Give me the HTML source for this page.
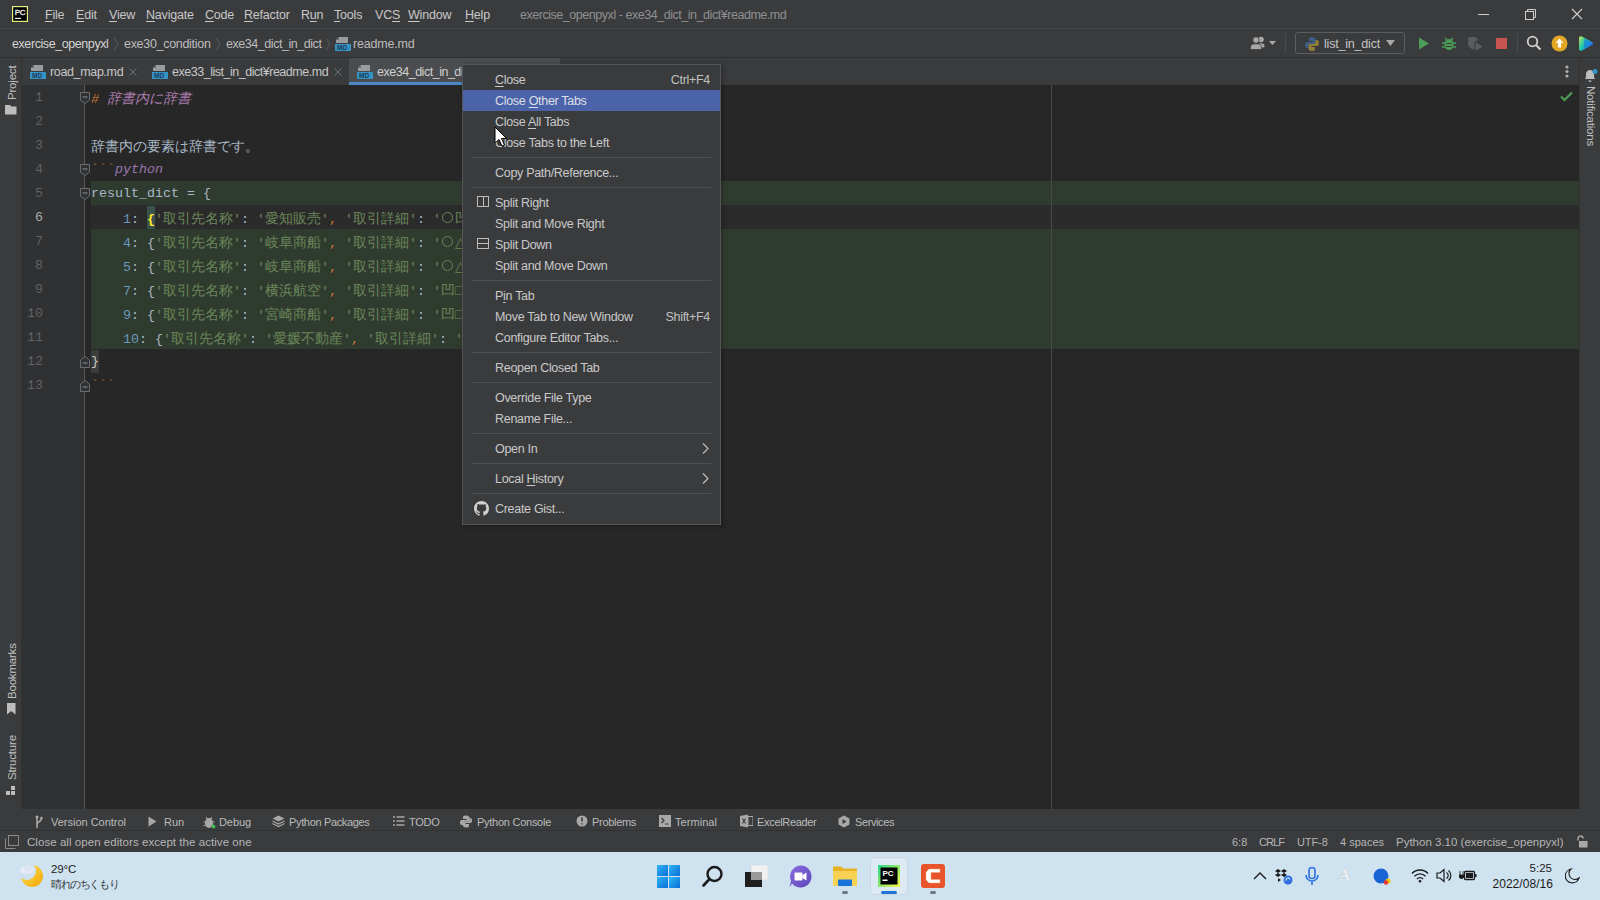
<!DOCTYPE html>
<html><head><meta charset="utf-8">
<style>
*{box-sizing:border-box;margin:0;padding:0}
html,body{width:1600px;height:900px;overflow:hidden;background:#272727;font-family:"Liberation Sans",sans-serif}
.a{position:absolute}
.t{position:absolute;white-space:nowrap;font-size:12.5px;color:#bbbbbb;line-height:16px}
.m{font-family:"Liberation Mono",monospace;font-size:13.33px;white-space:pre;position:absolute;line-height:24px;color:#a9b7c6}
.j{font-size:14px;font-family:"Liberation Sans",sans-serif}
u{text-decoration:underline;text-underline-offset:2px}
</style></head><body>

<!-- title bar -->
<div class="a" style="left:0;top:0;width:1600px;height:28px;background:#3a3b3d"></div>
<div class="a" style="left:0;top:28px;width:1600px;height:1px;background:#46474a"></div>
<!-- nav bar -->
<div class="a" style="left:0;top:29px;width:1600px;height:28px;background:#3a3b3d"></div>
<div class="a" style="left:0;top:57px;width:1600px;height:1px;background:#2d2f30"></div>
<!-- tabs row -->
<div class="a" style="left:21px;top:58px;width:1559px;height:27px;background:#3a3b3d"></div>
<!-- left strip -->
<div class="a" style="left:0;top:58px;width:21px;height:751px;background:#3a3b3d"></div>
<div class="a" style="left:21px;top:58px;width:1px;height:751px;background:#323232"></div>
<!-- right strip -->
<div class="a" style="left:1580px;top:58px;width:20px;height:751px;background:#3a3b3d"></div>
<div class="a" style="left:1579px;top:58px;width:1px;height:751px;background:#323232"></div>
<!-- gutter -->
<div class="a" style="left:22px;top:85px;width:63px;height:724px;background:#2f3133"></div>
<!-- editor -->
<div class="a" style="left:85px;top:85px;width:1494px;height:724px;background:#272727"></div>
<!-- bottom tool bar -->
<div class="a" style="left:0;top:809px;width:1600px;height:21px;background:#3a3b3d"></div>
<div class="a" style="left:0;top:830px;width:1600px;height:1px;background:#323334"></div>
<!-- status bar -->
<div class="a" style="left:0;top:831px;width:1600px;height:21px;background:#3a3b3d"></div>
<!-- taskbar -->
<div class="a" style="left:0;top:852px;width:1600px;height:48px;background:#cee2f0"></div>


<!-- TITLE BAR CONTENT -->
<svg class="a" style="left:12px;top:6px" width="16" height="16" viewBox="0 0 16 16"><rect x="0.6" y="0.6" width="14.8" height="14.8" fill="#000" stroke="#e2f07e" stroke-width="1.2"/><text x="2.8" y="9" font-family="Liberation Sans" font-size="8" fill="#f0f0f0" letter-spacing="-0.3" stroke="#f0f0f0" stroke-width="0.3">PC</text><rect x="3" y="11.8" width="6" height="1.2" fill="#f0f0f0"/></svg>
<div class="t" style="left:45px;top:7px;color:#c8c8c8;letter-spacing:-0.2px"><u>F</u>ile</div>
<div class="t" style="left:76px;top:7px;color:#c8c8c8;letter-spacing:-0.2px"><u>E</u>dit</div>
<div class="t" style="left:109px;top:7px;color:#c8c8c8;letter-spacing:-0.2px"><u>V</u>iew</div>
<div class="t" style="left:146px;top:7px;color:#c8c8c8;letter-spacing:-0.2px"><u>N</u>avigate</div>
<div class="t" style="left:205px;top:7px;color:#c8c8c8;letter-spacing:-0.2px"><u>C</u>ode</div>
<div class="t" style="left:244px;top:7px;color:#c8c8c8;letter-spacing:-0.2px"><u>R</u>efactor</div>
<div class="t" style="left:301px;top:7px;color:#c8c8c8;letter-spacing:-0.2px">R<u>u</u>n</div>
<div class="t" style="left:334px;top:7px;color:#c8c8c8;letter-spacing:-0.2px"><u>T</u>ools</div>
<div class="t" style="left:375px;top:7px;color:#c8c8c8;letter-spacing:-0.2px">VC<u>S</u></div>
<div class="t" style="left:408px;top:7px;color:#c8c8c8;letter-spacing:-0.2px"><u>W</u>indow</div>
<div class="t" style="left:465px;top:7px;color:#c8c8c8;letter-spacing:-0.2px"><u>H</u>elp</div>
<div class="t" style="left:520px;top:7px;color:#8f9091;letter-spacing:-0.46px">exercise_openpyxl - exe34_dict_in_dict¥readme.md</div>
<!-- window controls -->
<div class="a" style="left:1478px;top:14px;width:11px;height:1px;background:#cfcfcf"></div>
<svg class="a" style="left:1524px;top:8px" width="13" height="13" viewBox="0 0 13 13"><rect x="1.5" y="3.5" width="8" height="8" fill="none" stroke="#cfcfcf"/><path d="M3.5 3.5V1.5H11.5V9.5H9.5" fill="none" stroke="#cfcfcf"/></svg>
<svg class="a" style="left:1571px;top:8px" width="12" height="12" viewBox="0 0 12 12"><path d="M1 1L11 11M11 1L1 11" stroke="#cfcfcf" stroke-width="1.1"/></svg>


<!-- NAV BAR -->
<div class="t" style="left:12px;top:36px;color:#d4d4d4;letter-spacing:-0.42px">exercise_openpyxl</div>
<svg class="a" style="left:113px;top:37px" width="6" height="14"><path d="M1 1L5 7L1 13" fill="none" stroke="#5a5b5c"/></svg>
<div class="t" style="left:124px;top:36px;color:#bdbdbd;letter-spacing:-0.3px">exe30_condition</div>
<svg class="a" style="left:215px;top:37px" width="6" height="14"><path d="M1 1L5 7L1 13" fill="none" stroke="#5a5b5c"/></svg>
<div class="t" style="left:226px;top:36px;color:#bdbdbd;letter-spacing:-0.45px">exe34_dict_in_dict</div>
<svg class="a" style="left:325px;top:37px" width="6" height="14"><path d="M1 1L5 7L1 13" fill="none" stroke="#5a5b5c"/></svg>
<svg class="a" style="left:335px;top:36px" width="16" height="16" viewBox="0 0 16 16"><path d="M4 1H13V7H1V4Z" fill="#9a9b9c"/><path d="M4 1V4H1" fill="#6a6b6c"/><rect x="0" y="8" width="16" height="7" fill="#3592c4"/><text x="2" y="14" font-family="Liberation Sans" font-size="6.5" font-weight="bold" fill="#1d3b5a">MD</text></svg>
<div class="t" style="left:353px;top:36px;color:#bdbdbd;letter-spacing:-0.2px">readme.md</div>
<!-- right toolbar -->
<svg class="a" style="left:1250px;top:36px" width="28" height="14" viewBox="0 0 28 14"><circle cx="11" cy="3.5" r="2.8" fill="#a8a8a8"/><path d="M8 13V10C8 8 9.5 7.3 11 7.3C12.5 7.3 14.5 8 14.5 10V11Z" fill="#a8a8a8"/><circle cx="6" cy="4" r="3.2" fill="#a8a8a8" stroke="#3a3b3d" stroke-width="0.8"/><path d="M0.5 13.5V11C0.5 8.5 3 7.8 6 7.8C9 7.8 11.5 8.5 11.5 11V13.5Z" fill="#a8a8a8" stroke="#3a3b3d" stroke-width="0.8"/><path d="M19 5H26L22.5 9Z" fill="#a8a8a8"/></svg>
<div class="a" style="left:1285px;top:33px;width:1px;height:20px;background:#4a4b4c"></div>
<div class="a" style="left:1295px;top:32px;width:110px;height:22px;border:1px solid #5c5d5e;border-radius:3px"></div>
<svg class="a" style="left:1304px;top:36px;opacity:0.7" width="16" height="16" viewBox="0 0 16 16"><path d="M8 1C5 1 5 2 5 3V5H8.5V6H3C1.5 6 1 7.5 1 9C1 11 2 12 3 12H4.5V10C4.5 9 5.5 8 6.5 8H10C11 8 11.5 7.5 11.5 6.5V3C11.5 2 10.5 1 8 1Z" fill="#3e6e9e"/><path d="M8 15C11 15 11 14 11 13V11H7.5V10H13C14.5 10 15 8.5 15 7C15 5 14 4 13 4H11.5V6C11.5 7 10.5 8 9.5 8H6C5 8 4.5 8.5 4.5 9.5V13C4.5 14 5.5 15 8 15Z" fill="#b59a3a"/></svg>
<div class="t" style="left:1324px;top:36px;color:#c4c4c4;letter-spacing:-0.2px">list_in_dict</div>
<svg class="a" style="left:1386px;top:40px" width="10" height="7"><path d="M0 0H9L4.5 6Z" fill="#a8a8a8"/></svg>
<svg class="a" style="left:1418px;top:37px" width="12" height="13"><path d="M1 0.5L11 6.5L1 12.5Z" fill="#4a9c57"/></svg>
<svg class="a" style="left:1441px;top:35px" width="16" height="16" viewBox="0 0 16 16"><ellipse cx="8" cy="9.5" rx="4.5" ry="5.5" fill="#4a9c57"/><path d="M4 3L6 5M12 3L10 5M1 8H4M12 8H15M1 12H4M12 12H15" stroke="#4a9c57" stroke-width="1.5"/><path d="M5 8.5H11M5 11.5H11" stroke="#3a3b3d" stroke-width="1"/></svg>
<svg class="a" style="left:1467px;top:36px" width="17" height="15" viewBox="0 0 17 15"><path d="M1 2L6 0.5L9 1.5V5L7.5 6V12.5L6 13.5C4 12.5 1 11 1 8Z" fill="#5a5c5f"/><path d="M8.5 6L15.5 10.5L8.5 15Z" fill="#5a5c5f"/><path d="M9.5 1.8L11 2.3V4.5L9.5 5.5Z" fill="#5a5c5f"/></svg>
<div class="a" style="left:1496px;top:38px;width:11px;height:11px;background:#c75450"></div>
<div class="a" style="left:1517px;top:33px;width:1px;height:20px;background:#4a4b4c"></div>
<svg class="a" style="left:1526px;top:35px" width="16" height="16" viewBox="0 0 16 16"><circle cx="6.5" cy="6.5" r="4.8" fill="none" stroke="#cfcfcf" stroke-width="1.8"/><path d="M10 10L14.5 14.5" stroke="#cfcfcf" stroke-width="2.2"/></svg>
<svg class="a" style="left:1551px;top:35px" width="17" height="17" viewBox="0 0 17 17"><circle cx="8.5" cy="8.5" r="8" fill="#e3a727"/><path d="M8.5 3.5L12.5 8H10V12.5H7V8H4.5Z" fill="#fff"/></svg>
<svg class="a" style="left:1578px;top:35px" width="16" height="17" viewBox="0 0 16 17"><defs><linearGradient id="tbg" x1="0" y1="0" x2="1" y2="0.6"><stop offset="0" stop-color="#c6e35a"/><stop offset="0.45" stop-color="#22c9a8"/><stop offset="0.75" stop-color="#1b9de0"/><stop offset="1" stop-color="#2f5fe0"/></linearGradient></defs><path d="M1 3C1 1.3 2.5 0.8 4 1.5L14 7C15.5 7.8 15.5 9.2 14 10L4 15.5C2.5 16.2 1 15.7 1 14Z" fill="url(#tbg)"/><path d="M6 3.5L14 8.5L6 13.5Z" fill="#1c6fe0" opacity="0.55"/></svg>


<!-- TABS -->
<svg class="a" style="left:30px;top:64px" width="16" height="16" viewBox="0 0 16 16"><path d="M4 1H13V7H1V4Z" fill="#9a9b9c"/><path d="M4 1V4H1" fill="#6a6b6c"/><rect x="0" y="8" width="16" height="7" fill="#3592c4"/><text x="2" y="14" font-family="Liberation Sans" font-size="6.5" font-weight="bold" fill="#1d3b5a">MD</text></svg>
<div class="t" style="left:50px;top:64px;color:#c8c8c8;letter-spacing:-0.35px">road_map.md</div>
<svg class="a" style="left:129px;top:68px" width="8" height="8"><path d="M0.5 0.5L7.5 7.5M7.5 0.5L0.5 7.5" stroke="#6f7072" stroke-width="1"/></svg>
<svg class="a" style="left:152px;top:64px" width="16" height="16" viewBox="0 0 16 16"><path d="M4 1H13V7H1V4Z" fill="#9a9b9c"/><path d="M4 1V4H1" fill="#6a6b6c"/><rect x="0" y="8" width="16" height="7" fill="#3592c4"/><text x="2" y="14" font-family="Liberation Sans" font-size="6.5" font-weight="bold" fill="#1d3b5a">MD</text></svg>
<div class="t" style="left:172px;top:64px;color:#c8c8c8;letter-spacing:-0.48px">exe33_list_in_dict¥readme.md</div>
<svg class="a" style="left:334px;top:68px" width="8" height="8"><path d="M0.5 0.5L7.5 7.5M7.5 0.5L0.5 7.5" stroke="#6f7072" stroke-width="1"/></svg>
<div class="a" style="left:349px;top:58px;width:211px;height:24px;background:#4a4c4e"></div>
<div class="a" style="left:349px;top:82px;width:211px;height:3px;background:#4a88c7"></div>
<svg class="a" style="left:357px;top:64px" width="16" height="16" viewBox="0 0 16 16"><path d="M4 1H13V7H1V4Z" fill="#9a9b9c"/><path d="M4 1V4H1" fill="#6a6b6c"/><rect x="0" y="8" width="16" height="7" fill="#3592c4"/><text x="2" y="14" font-family="Liberation Sans" font-size="6.5" font-weight="bold" fill="#1d3b5a">MD</text></svg>
<div class="t" style="left:377px;top:64px;color:#d0d0d0;letter-spacing:-0.48px">exe34_dict_in_dict¥readme.md</div>
<svg class="a" style="left:1565px;top:65px" width="4" height="13"><circle cx="2" cy="2" r="1.6" fill="#b0b0b0"/><circle cx="2" cy="6.5" r="1.6" fill="#b0b0b0"/><circle cx="2" cy="11" r="1.6" fill="#b0b0b0"/></svg>
<!-- left strip -->
<div class="a" style="left:5px;top:60px;width:14px;height:40px;"><div style="position:absolute;left:0;top:40px;transform-origin:0 0;transform:rotate(-90deg);font:11.5px 'Liberation Sans';color:#c0c0c0;white-space:nowrap;line-height:14px;letter-spacing:-0.2px">Project</div></div>
<svg class="a" style="left:5px;top:105px" width="12" height="10"><path d="M0 0H5L6 1.5H11.5V9.5H0Z" fill="#bdbdbd"/></svg>
<div class="a" style="left:5px;top:645px;width:14px;height:54px;"><div style="position:absolute;left:0;top:54px;transform-origin:0 0;transform:rotate(-90deg);font:11.5px 'Liberation Sans';color:#c0c0c0;white-space:nowrap;line-height:14px;letter-spacing:-0.2px">Bookmarks</div></div>
<svg class="a" style="left:7px;top:703px" width="9" height="12"><path d="M0 0H8.5V11.5L4.25 8L0 11.5Z" fill="#bdbdbd"/></svg>
<div class="a" style="left:5px;top:736px;width:14px;height:44px;"><div style="position:absolute;left:0;top:44px;transform-origin:0 0;transform:rotate(-90deg);font:11.5px 'Liberation Sans';color:#c0c0c0;white-space:nowrap;line-height:14px;letter-spacing:-0.2px">Structure</div></div>
<svg class="a" style="left:6px;top:786px" width="10" height="10"><rect x="5" y="0" width="4" height="4" fill="#bdbdbd"/><rect x="0" y="5" width="4" height="4" fill="#bdbdbd"/><rect x="5" y="5" width="4" height="4" fill="#bdbdbd"/></svg>
<!-- right strip -->
<svg class="a" style="left:1583px;top:69px" width="15" height="14" viewBox="0 0 15 14"><path d="M2 10C3 9 3 7 3 5C3 2.5 5 1 7 1C9 1 11 2.5 11 5C11 7 11 9 12 10Z" fill="#bdbdbd"/><path d="M5.5 11.5A1.5 1.5 0 0 0 8.5 11.5Z" fill="#bdbdbd"/><circle cx="12" cy="2.5" r="2.5" fill="#3592c4"/></svg>
<div class="a" style="left:1584px;top:86px;width:14px;height:64px;"><div style="position:absolute;left:14px;top:0;transform-origin:0 0;transform:rotate(90deg);font:11.5px 'Liberation Sans';color:#c0c0c0;white-space:nowrap;line-height:14px;letter-spacing:-0.2px">Notifications</div></div>

<!-- EDITOR -->
<div class="a" style="left:91px;top:181px;width:1488px;height:24px;background:#303b2f"></div>
<div class="a" style="left:91px;top:205px;width:1488px;height:24px;background:#2b2b2b"></div>
<div class="a" style="left:91px;top:229px;width:1488px;height:120px;background:#303b2f"></div>
<div class="a" style="left:147px;top:206px;width:8px;height:23px;background:#3b514d"></div>
<div class="a" style="left:91px;top:350px;width:8px;height:23px;background:#3a3e3a"></div>
<div class="a" style="left:1051px;top:85px;width:1px;height:724px;background:#474a47"></div>
<div class="a" style="left:84px;top:85px;width:1px;height:724px;background:#555759"></div>
<div class="m" style="left:18px;top:86px;width:25px;text-align:right;color:#5f6163">1</div>
<div class="m" style="left:18px;top:110px;width:25px;text-align:right;color:#5f6163">2</div>
<div class="m" style="left:18px;top:134px;width:25px;text-align:right;color:#5f6163">3</div>
<div class="m" style="left:18px;top:158px;width:25px;text-align:right;color:#5f6163">4</div>
<div class="m" style="left:18px;top:182px;width:25px;text-align:right;color:#5f6163">5</div>
<div class="m" style="left:18px;top:206px;width:25px;text-align:right;color:#a9a9a9">6</div>
<div class="m" style="left:18px;top:230px;width:25px;text-align:right;color:#5f6163">7</div>
<div class="m" style="left:18px;top:254px;width:25px;text-align:right;color:#5f6163">8</div>
<div class="m" style="left:18px;top:278px;width:25px;text-align:right;color:#5f6163">9</div>
<div class="m" style="left:18px;top:302px;width:25px;text-align:right;color:#5f6163">10</div>
<div class="m" style="left:18px;top:326px;width:25px;text-align:right;color:#5f6163">11</div>
<div class="m" style="left:18px;top:350px;width:25px;text-align:right;color:#5f6163">12</div>
<div class="m" style="left:18px;top:374px;width:25px;text-align:right;color:#5f6163">13</div>
<svg class="a" style="left:79px;top:91px" width="12" height="14" viewBox="0 0 12 14"><path d="M1.5 1.5H10.5V9L6 12.5L1.5 9Z" fill="#2f3133" stroke="#6b6d6f"/><path d="M3.5 6H8.5" stroke="#8a8c8e"/></svg>
<svg class="a" style="left:79px;top:163px" width="12" height="14" viewBox="0 0 12 14"><path d="M1.5 1.5H10.5V9L6 12.5L1.5 9Z" fill="#2f3133" stroke="#6b6d6f"/><path d="M3.5 6H8.5" stroke="#8a8c8e"/></svg>
<svg class="a" style="left:79px;top:187px" width="12" height="14" viewBox="0 0 12 14"><path d="M1.5 1.5H10.5V9L6 12.5L1.5 9Z" fill="#2f3133" stroke="#6b6d6f"/><path d="M3.5 6H8.5" stroke="#8a8c8e"/></svg>
<svg class="a" style="left:79px;top:355px" width="12" height="14" viewBox="0 0 12 14"><path d="M1.5 12.5H10.5V5L6 1.5L1.5 5Z" fill="#2f3133" stroke="#6b6d6f"/><path d="M3.5 8H8.5" stroke="#8a8c8e"/></svg>
<svg class="a" style="left:79px;top:379px" width="12" height="14" viewBox="0 0 12 14"><path d="M1.5 12.5H10.5V5L6 1.5L1.5 5Z" fill="#2f3133" stroke="#6b6d6f"/><path d="M3.5 8H8.5" stroke="#8a8c8e"/></svg>
<div class="m" style="left:91px;top:86px"><span style="color:#cc7832;font-style:italic">#</span> <span style="color:#a97bab;font-style:italic"><span class="j" style="font-size:14px">辞書内に辞書</span></span></div>
<div class="m" style="left:91px;top:134px"><span class="j">辞書内の要素は辞書です。</span></div>
<div class="m" style="left:91px;top:158px"><span style="color:#a5703f">```</span><span style="color:#9876aa;font-style:italic">python</span></div>
<div class="m" style="left:91px;top:182px">result_dict = {</div>
<div class="m" style="left:91px;top:206px">    <span style="color:#6897bb">1</span>: <span style="color:#ffef28;font-weight:bold">{</span><span style="color:#6a8759">'<span class="j">取引先名称</span>'</span>: <span style="color:#6a8759">'<span class="j">愛知販売</span>'</span><span style="color:#cc7832">,</span> <span style="color:#6a8759">'<span class="j">取引詳細</span>'</span>: <span style="color:#6a8759">'<span class="j"><span style="display:inline-block;width:14px;height:12px;vertical-align:-1px;position:relative"><span style="position:absolute;left:1px;top:0;width:11px;height:11px;border:1px solid #6a8759;border-radius:50%"></span></span>凹</span></span></div>
<div class="m" style="left:91px;top:230px">    <span style="color:#6897bb">4</span>: {<span style="color:#6a8759">'<span class="j">取引先名称</span>'</span>: <span style="color:#6a8759">'<span class="j">岐阜商船</span>'</span><span style="color:#cc7832">,</span> <span style="color:#6a8759">'<span class="j">取引詳細</span>'</span>: <span style="color:#6a8759">'<span class="j"><span style="display:inline-block;width:14px;height:12px;vertical-align:-1px;position:relative"><span style="position:absolute;left:1px;top:0;width:11px;height:11px;border:1px solid #6a8759;border-radius:50%"></span></span>△</span></span></div>
<div class="m" style="left:91px;top:254px">    <span style="color:#6897bb">5</span>: {<span style="color:#6a8759">'<span class="j">取引先名称</span>'</span>: <span style="color:#6a8759">'<span class="j">岐阜商船</span>'</span><span style="color:#cc7832">,</span> <span style="color:#6a8759">'<span class="j">取引詳細</span>'</span>: <span style="color:#6a8759">'<span class="j"><span style="display:inline-block;width:14px;height:12px;vertical-align:-1px;position:relative"><span style="position:absolute;left:1px;top:0;width:11px;height:11px;border:1px solid #6a8759;border-radius:50%"></span></span>△</span></span></div>
<div class="m" style="left:91px;top:278px">    <span style="color:#6897bb">7</span>: {<span style="color:#6a8759">'<span class="j">取引先名称</span>'</span>: <span style="color:#6a8759">'<span class="j">横浜航空</span>'</span><span style="color:#cc7832">,</span> <span style="color:#6a8759">'<span class="j">取引詳細</span>'</span>: <span style="color:#6a8759">'<span class="j">凹□</span></span></div>
<div class="m" style="left:91px;top:302px">    <span style="color:#6897bb">9</span>: {<span style="color:#6a8759">'<span class="j">取引先名称</span>'</span>: <span style="color:#6a8759">'<span class="j">宮崎商船</span>'</span><span style="color:#cc7832">,</span> <span style="color:#6a8759">'<span class="j">取引詳細</span>'</span>: <span style="color:#6a8759">'<span class="j">凹□</span></span></div>
<div class="m" style="left:91px;top:326px">    <span style="color:#6897bb">10</span>: {<span style="color:#6a8759">'<span class="j">取引先名称</span>'</span>: <span style="color:#6a8759">'<span class="j">愛媛不動産</span>'</span><span style="color:#cc7832">,</span> <span style="color:#6a8759">'<span class="j">取引詳細</span>'</span>: <span style="color:#6a8759">'<span class="j"></span></span></div>
<div class="m" style="left:91px;top:350px"><span style="color:#c8c8c8">}</span></div>
<div class="m" style="left:91px;top:374px"><span style="color:#a5703f">```</span></div>
<svg class="a" style="left:1560px;top:91px" width="13" height="11"><path d="M1 5.5L4.5 9L12 1.5" fill="none" stroke="#4a9c57" stroke-width="2.2"/></svg>

<!-- CONTEXT MENU -->
<div class="a" style="left:463px;top:65px;width:260px;height:462px;background:rgba(0,0,0,0.25);filter:blur(2px)"></div>
<div class="a" style="left:462px;top:64px;width:259px;height:461px;background:#3a3b3d;border:1px solid #545556"></div>
<div class="t" style="left:495px;top:72px;color:#c9c9c9;letter-spacing:-0.3px"><u>C</u>lose</div>
<div class="t" style="left:600px;width:110px;text-align:right;top:72px;color:#c0c0c0;letter-spacing:-0.3px">Ctrl+F4</div>
<div class="a" style="left:463px;top:90px;width:257px;height:21px;background:#4b64a9"></div>
<div class="t" style="left:495px;top:93px;color:#dcdfe8;letter-spacing:-0.3px">Close <u>O</u>ther Tabs</div>
<div class="t" style="left:495px;top:114px;color:#c9c9c9;letter-spacing:-0.3px">Close <u>A</u>ll Tabs</div>
<div class="t" style="left:495px;top:135px;color:#c9c9c9;letter-spacing:-0.3px">Close Tabs to the Left</div>
<div class="a" style="left:471px;top:157px;width:240px;height:1px;background:#4f5052"></div>
<div class="t" style="left:495px;top:165px;color:#c9c9c9;letter-spacing:-0.3px">Copy Path/Reference...</div>
<div class="a" style="left:471px;top:187px;width:240px;height:1px;background:#4f5052"></div>
<div class="t" style="left:495px;top:195px;color:#c9c9c9;letter-spacing:-0.3px">Split Right</div>
<svg class="a" style="left:477px;top:196px" width="13" height="12"><rect x="0.5" y="0.5" width="11" height="10" fill="none" stroke="#bdbdbd"/><path d="M6.5 0.5V10.5" stroke="#bdbdbd"/></svg>
<div class="t" style="left:495px;top:216px;color:#c9c9c9;letter-spacing:-0.3px">Split and Move Right</div>
<div class="t" style="left:495px;top:237px;color:#c9c9c9;letter-spacing:-0.3px">Split Down</div>
<svg class="a" style="left:477px;top:238px" width="13" height="12"><rect x="0.5" y="0.5" width="11" height="10" fill="none" stroke="#bdbdbd"/><path d="M0.5 5.5H11.5" stroke="#bdbdbd"/></svg>
<div class="t" style="left:495px;top:258px;color:#c9c9c9;letter-spacing:-0.3px">Split and Move Down</div>
<div class="a" style="left:471px;top:280px;width:240px;height:1px;background:#4f5052"></div>
<div class="t" style="left:495px;top:288px;color:#c9c9c9;letter-spacing:-0.3px">P<u>i</u>n Tab</div>
<div class="t" style="left:495px;top:309px;color:#c9c9c9;letter-spacing:-0.3px">Move Tab to New Window</div>
<div class="t" style="left:600px;width:110px;text-align:right;top:309px;color:#c0c0c0;letter-spacing:-0.3px">Shift+F4</div>
<div class="t" style="left:495px;top:330px;color:#c9c9c9;letter-spacing:-0.3px">Configure Editor Tabs...</div>
<div class="a" style="left:471px;top:352px;width:240px;height:1px;background:#4f5052"></div>
<div class="t" style="left:495px;top:360px;color:#c9c9c9;letter-spacing:-0.3px">Reopen Closed Tab</div>
<div class="a" style="left:471px;top:382px;width:240px;height:1px;background:#4f5052"></div>
<div class="t" style="left:495px;top:390px;color:#c9c9c9;letter-spacing:-0.3px">Override File Type</div>
<div class="t" style="left:495px;top:411px;color:#c9c9c9;letter-spacing:-0.3px">Rename File...</div>
<div class="a" style="left:471px;top:433px;width:240px;height:1px;background:#4f5052"></div>
<div class="t" style="left:495px;top:441px;color:#c9c9c9;letter-spacing:-0.3px">Open In</div>
<svg class="a" style="left:702px;top:443px" width="7" height="11"><path d="M1 0.5L6 5.5L1 10.5" fill="none" stroke="#bdbdbd" stroke-width="1.2"/></svg>
<div class="a" style="left:471px;top:463px;width:240px;height:1px;background:#4f5052"></div>
<div class="t" style="left:495px;top:471px;color:#c9c9c9;letter-spacing:-0.3px">Local <u>H</u>istory</div>
<svg class="a" style="left:702px;top:473px" width="7" height="11"><path d="M1 0.5L6 5.5L1 10.5" fill="none" stroke="#bdbdbd" stroke-width="1.2"/></svg>
<div class="a" style="left:471px;top:493px;width:240px;height:1px;background:#4f5052"></div>
<div class="t" style="left:495px;top:501px;color:#c9c9c9;letter-spacing:-0.3px">Create Gist...</div>
<svg class="a" style="left:474px;top:501px" width="15" height="15" viewBox="0 0 16 16"><path fill="#d0d0d0" d="M8 0C3.58 0 0 3.58 0 8c0 3.54 2.29 6.53 5.47 7.59.4.07.55-.17.55-.38 0-.19-.01-.82-.01-1.49-2.01.37-2.53-.49-2.69-.94-.09-.23-.48-.94-.82-1.13-.28-.15-.68-.52-.01-.53.63-.01 1.08.58 1.23.82.72 1.21 1.87.87 2.33.66.07-.52.28-.87.51-1.07-1.78-.2-3.64-.89-3.64-3.95 0-.87.31-1.59.82-2.15-.08-.2-.36-1.02.08-2.12 0 0 .67-.21 2.2.82.64-.18 1.32-.27 2-.27.68 0 1.36.09 2 .27 1.53-1.04 2.2-.82 2.2-.82.44 1.1.16 1.92.08 2.12.51.56.82 1.27.82 2.15 0 3.07-1.87 3.75-3.65 3.95.29.25.54.73.54 1.48 0 1.07-.01 1.93-.01 2.2 0 .21.15.46.55.38A8.013 8.013 0 0016 8c0-4.42-3.58-8-8-8z"/></svg>
<svg class="a" style="left:494px;top:126px" width="13" height="21" viewBox="0 0 13 21"><path d="M1 1V17L5 13.5L8 20L10.5 19L7.5 12.5H12.5Z" fill="#fff" stroke="#000" stroke-width="1"/></svg>

<!-- BOTTOM -->
<div class="t" style="left:51px;top:814px;font-size:11px;color:#bbbbbb;letter-spacing:-0.01px">Version Control</div>
<div class="t" style="left:164px;top:814px;font-size:11px;color:#bbbbbb;letter-spacing:-0.06px">Run</div>
<div class="t" style="left:219px;top:814px;font-size:11px;color:#bbbbbb;letter-spacing:-0.08px">Debug</div>
<div class="t" style="left:289px;top:814px;font-size:11px;color:#bbbbbb;letter-spacing:-0.34px">Python Packages</div>
<div class="t" style="left:409px;top:814px;font-size:11px;color:#bbbbbb;letter-spacing:-0.27px">TODO</div>
<div class="t" style="left:477px;top:814px;font-size:11px;color:#bbbbbb;letter-spacing:-0.26px">Python Console</div>
<div class="t" style="left:592px;top:814px;font-size:11px;color:#bbbbbb;letter-spacing:-0.31px">Problems</div>
<div class="t" style="left:675px;top:814px;font-size:11px;color:#bbbbbb;letter-spacing:0.05px">Terminal</div>
<div class="t" style="left:757px;top:814px;font-size:11px;color:#bbbbbb;letter-spacing:-0.32px">ExcelReader</div>
<div class="t" style="left:855px;top:814px;font-size:11px;color:#bbbbbb;letter-spacing:-0.40px">Services</div>
<svg class="a" style="left:35px;top:815px" width="8" height="14" viewBox="0 0 8 14"><circle cx="2" cy="2" r="1.5" fill="#a8a8a8"/><circle cx="6.5" cy="3" r="1.3" fill="#a8a8a8"/><path d="M2 2V13M6.5 3C6.5 7 2 7 2 9" stroke="#a8a8a8" stroke-width="1.6" fill="none"/></svg>
<svg class="a" style="left:148px;top:816px" width="9" height="11"><path d="M0.5 0.5L8.5 5.5L0.5 10.5Z" fill="#a8a8a8"/></svg>
<svg class="a" style="left:203px;top:815px" width="13" height="14" viewBox="0 0 13 14"><ellipse cx="6" cy="8" rx="4" ry="5" fill="#a8a8a8"/><path d="M3 2.5L4.5 4M9 2.5L7.5 4M0.5 7H2.5M9.5 7H11.5M0.5 10.5H2.5" stroke="#a8a8a8" stroke-width="1.2"/><circle cx="10.5" cy="11.5" r="2" fill="#3fb950"/></svg>
<svg class="a" style="left:272px;top:815px" width="13" height="13" viewBox="0 0 13 13"><path d="M6.5 0.5L12.5 3.5L6.5 6.5L0.5 3.5Z" fill="#a8a8a8"/><path d="M0.5 6L6.5 9L12.5 6M0.5 8.5L6.5 11.5L12.5 8.5" fill="none" stroke="#a8a8a8" stroke-width="1.2"/></svg>
<svg class="a" style="left:393px;top:816px" width="12" height="11" viewBox="0 0 12 11"><path d="M0 1H2M0 5H2M0 9H2M3.5 1H11.5M3.5 5H11.5M3.5 9H11.5" stroke="#a8a8a8" stroke-width="1.6"/></svg>
<svg class="a" style="left:460px;top:815px" width="12" height="13" viewBox="0 0 12 13"><path d="M6 0.5C3 0.5 3 1.5 3 2.5V4H6.5V5H1.5C0.5 5 0 6 0 7.5C0 9 0.5 10 1.5 10H3V8.5C3 7.5 4 6.5 5 6.5H8C9 6.5 9.5 6 9.5 5V2.5C9.5 1.5 8.5 0.5 6 0.5Z" fill="#a8a8a8"/><path d="M6 12.5C9 12.5 9 11.5 9 10.5V9H5.5V8H10.5C11.5 8 12 7 12 5.5C12 4 11.5 3 10.5 3H9.5V4.5C9.5 5.5 8.5 6.5 7.5 6.5H4.5C3.5 6.5 3 7 3 8V10.5C3 11.5 4 12.5 6 12.5Z" fill="#a8a8a8"/></svg>
<svg class="a" style="left:576px;top:815px" width="12" height="12"><circle cx="6" cy="6" r="5.5" fill="#a8a8a8"/><path d="M6 2.5V6.5M6 8.3V9.6" stroke="#3a3b3d" stroke-width="1.6"/></svg>
<svg class="a" style="left:659px;top:815px" width="12" height="12"><rect x="0" y="0" width="12" height="12" fill="#a8a8a8"/><path d="M2.5 3L5 5.5L2.5 8M6 9H9.5" stroke="#3a3b3d" stroke-width="1.2" fill="none"/></svg>
<svg class="a" style="left:740px;top:814px" width="13" height="14" viewBox="0 0 13 14"><path d="M0 2L8 0.5V13.5L0 12Z" fill="#a8a8a8"/><rect x="8" y="2.5" width="5" height="9" fill="none" stroke="#a8a8a8"/><path d="M2.5 4.5L5.5 9.5M5.5 4.5L2.5 9.5" stroke="#3a3b3d" stroke-width="1.1"/></svg>
<svg class="a" style="left:838px;top:815px" width="12" height="13" viewBox="0 0 12 13"><path d="M6 0.5L11.5 3.5V9.5L6 12.5L0.5 9.5V3.5Z" fill="#a8a8a8"/><path d="M4.5 4L8.5 6.5L4.5 9Z" fill="#3a3b3d"/></svg>
<svg class="a" style="left:5px;top:835px" width="14" height="14"><rect x="3.5" y="0.5" width="10" height="10" fill="none" stroke="#8a8a8a"/><path d="M0.5 3.5V13.5H10.5" fill="none" stroke="#8a8a8a"/></svg>
<div class="t" style="left:27px;top:834px;font-size:11.5px;color:#b5b5b5;letter-spacing:0.05px">Close all open editors except the active one</div>
<div class="t" style="left:1232px;top:834px;font-size:11px;color:#b5b5b5;letter-spacing:0px">6:8</div>
<div class="t" style="left:1259px;top:834px;font-size:11px;color:#b5b5b5;letter-spacing:-0.9px">CRLF</div>
<div class="t" style="left:1297px;top:834px;font-size:11px;color:#b5b5b5;letter-spacing:-0.1px">UTF-8</div>
<div class="t" style="left:1340px;top:834px;font-size:11px;color:#b5b5b5;letter-spacing:0px">4 spaces</div>
<div class="t" style="left:1396px;top:834px;font-size:11.5px;color:#b5b5b5;letter-spacing:0.0px">Python 3.10 (exercise_openpyxl)</div>
<svg class="a" style="left:1575px;top:835px" width="13" height="13" viewBox="0 0 13 13"><path d="M3 5.5V3.5A2.5 2.5 0 0 1 8 3.5" fill="none" stroke="#a8a8a8" stroke-width="1.5"/><rect x="4" y="6" width="8.5" height="6.5" fill="#a8a8a8"/></svg>

<!-- TASKBAR -->
<svg class="a" style="left:18px;top:862px" width="26" height="26" viewBox="0 0 26 26"><defs><linearGradient id="mg" x1="0" y1="0" x2="1" y2="1"><stop offset="0" stop-color="#ffe066"/><stop offset="1" stop-color="#f0a800"/></linearGradient><mask id="mm"><rect width="26" height="26" fill="#fff"/><circle cx="9" cy="9" r="9" fill="#000"/></mask></defs><circle cx="14" cy="14" r="11" fill="url(#mg)" mask="url(#mm)"/><ellipse cx="9" cy="8" rx="7" ry="4" fill="#e8ecf4" opacity="0.85"/><ellipse cx="10" cy="6" rx="4" ry="3.5" fill="#dde2ee" opacity="0.85"/></svg>
<div class="t" style="left:51px;top:861px;font-size:11.5px;color:#1a1a1a;letter-spacing:-0.1px">29°C</div>
<div class="t" style="left:51px;top:876px;font-size:11px;color:#3a3a3a;letter-spacing:-1.4px">晴れのちくもり</div>
<svg class="a" style="left:657px;top:865px" width="23" height="23" viewBox="0 0 23 23"><defs><linearGradient id="wg" x1="0" y1="0" x2="1" y2="1"><stop offset="0" stop-color="#2fb4f5"/><stop offset="1" stop-color="#0a6fd6"/></linearGradient></defs><rect x="0" y="0" width="11" height="11" fill="url(#wg)"/><rect x="12" y="0" width="11" height="11" fill="url(#wg)"/><rect x="0" y="12" width="11" height="11" fill="url(#wg)"/><rect x="12" y="12" width="11" height="11" fill="url(#wg)"/></svg>
<svg class="a" style="left:702px;top:865px" width="22" height="22" viewBox="0 0 22 22"><circle cx="12.5" cy="9" r="7" fill="none" stroke="#1b1b1b" stroke-width="2.4"/><path d="M7.5 14L1.5 20.5" stroke="#1b1b1b" stroke-width="2.6" stroke-linecap="round"/></svg>
<svg class="a" style="left:745px;top:865px" width="23" height="22" viewBox="0 0 23 22"><rect x="6" y="0" width="17" height="15" fill="#f2f2f2"/><rect x="6" y="0" width="17" height="15" fill="none" stroke="#d0d0d0" stroke-width="0.6"/><rect x="0" y="7" width="17" height="15" fill="#1f1f1f"/><rect x="6" y="7" width="11" height="8" fill="#9a9a9a"/></svg>
<svg class="a" style="left:789px;top:865px" width="23" height="23" viewBox="0 0 23 23"><defs><linearGradient id="cg" x1="0" y1="0" x2="1" y2="1"><stop offset="0" stop-color="#8d6ce0"/><stop offset="1" stop-color="#5a48b8"/></linearGradient></defs><path d="M11.5 0.5A11 11 0 1 1 3 18.5L0.5 22.5L2 16A11 11 0 0 1 11.5 0.5Z" fill="url(#cg)"/><rect x="5.5" y="7.5" width="8" height="8" rx="1" fill="#fff"/><path d="M13.5 10L17.5 7.5V15.5L13.5 13Z" fill="#fff"/></svg>
<svg class="a" style="left:833px;top:865px" width="24" height="22" viewBox="0 0 24 22"><path d="M0 1.5H8L10 3.5H24V21H0Z" fill="#e8b321"/><rect x="0" y="6" width="24" height="15" fill="#f7d154"/><rect x="5" y="14.5" width="14" height="6.5" rx="1" fill="#1a73d9"/></svg>
<div class="a" style="left:842px;top:891px;width:6px;height:3px;border-radius:2px;background:#6f7a82"></div>
<div class="a" style="left:870px;top:857px;width:38px;height:38px;border-radius:4px;background:#dde9f3;border:1px solid #cbd8e3"></div>
<svg class="a" style="left:878px;top:865px" width="22" height="22" viewBox="0 0 22 22"><defs><linearGradient id="pg" x1="0" y1="0" x2="1" y2="1"><stop offset="0" stop-color="#21d789"/><stop offset="1" stop-color="#fcf84a"/></linearGradient></defs><rect x="0" y="0" width="22" height="22" fill="url(#pg)"/><rect x="2.5" y="2.5" width="17" height="17" fill="#000"/><text x="4.5" y="11" font-family="Liberation Sans" font-weight="bold" font-size="8" fill="#fff">PC</text><rect x="4.5" y="14.5" width="5" height="1.5" fill="#fff"/></svg>
<div class="a" style="left:881px;top:891px;width:16px;height:3px;border-radius:2px;background:#1f74d6"></div>
<svg class="a" style="left:921px;top:864px" width="24" height="24" viewBox="0 0 24 24"><rect x="0" y="0" width="24" height="24" rx="3" fill="#e8542c"/><path d="M19 5H8L5 8V16L8 19H19V15.5H10V8.5H19Z" fill="#fff"/><path d="M19 5H8L5 8V16L8 19H19V15.5H10V8.5H19Z" fill="none" stroke="#f4a070" stroke-width="0.5"/></svg>
<div class="a" style="left:930px;top:891px;width:6px;height:3px;border-radius:2px;background:#6f7a82"></div>
<svg class="a" style="left:1253px;top:871px" width="14" height="9"><path d="M1 8L7 2L13 8" fill="none" stroke="#1b1b1b" stroke-width="1.4"/></svg>
<svg class="a" style="left:1275px;top:868px" width="18" height="17" viewBox="0 0 18 17"><path d="M3 1L6 3L3 5L0 3ZM9 1L12 3L9 5L6 3ZM3 5L6 7L3 9L0 7ZM9 5L12 7L9 9L6 7ZM3 10L6 12L3 14Z" fill="#1b1b1b"/><circle cx="13" cy="12" r="4.5" fill="#2f6fe0"/><path d="M11 12.5A2 2 0 0 1 15 11.5" stroke="#fff" stroke-width="1" fill="none"/></svg>
<svg class="a" style="left:1305px;top:867px" width="14" height="19" viewBox="0 0 14 19"><rect x="4" y="0.5" width="6" height="11" rx="3" fill="none" stroke="#2f6fe0" stroke-width="1.6"/><path d="M1 8A6 6 0 0 0 13 8M7 14V18" fill="none" stroke="#2f6fe0" stroke-width="1.6"/></svg>
<div class="a" style="left:1339px;top:866px;font:bold 15px 'Liberation Serif';color:#eef2f6;line-height:18px;text-shadow:0 0 1px #9aa">A</div>
<svg class="a" style="left:1373px;top:868px" width="19" height="17" viewBox="0 0 19 17"><circle cx="8" cy="8" r="7.5" fill="#1a63d6"/><circle cx="15" cy="13" r="2.5" fill="#f2c500"/><circle cx="13" cy="14.5" r="2.2" fill="#e53935"/></svg>
<svg class="a" style="left:1411px;top:868px" width="18" height="15" viewBox="0 0 18 15"><path d="M1 5.5A11 11 0 0 1 17 5.5M3.5 8.3A7.5 7.5 0 0 1 14.5 8.3M6 11A4 4 0 0 1 12 11" fill="none" stroke="#1b1b1b" stroke-width="1.4"/><circle cx="9" cy="13.3" r="1.3" fill="#1b1b1b"/></svg>
<svg class="a" style="left:1436px;top:868px" width="16" height="15" viewBox="0 0 16 15"><path d="M1 5H4L8 1.5V13.5L4 10H1Z" fill="none" stroke="#1b1b1b" stroke-width="1.2"/><path d="M10.5 4.5A3.5 3.5 0 0 1 10.5 10.5M12.5 2.5A6.5 6.5 0 0 1 12.5 12.5" fill="none" stroke="#1b1b1b" stroke-width="1.2"/></svg>
<svg class="a" style="left:1459px;top:868px" width="18" height="15" viewBox="0 0 18 15"><path d="M1 3V7M4 3V7M0 7H5V9L3.5 10.5H1.5L0 9Z" fill="#1b1b1b" stroke="#1b1b1b" stroke-width="0.8"/><rect x="5.5" y="3.5" width="10" height="8" rx="1" fill="none" stroke="#1b1b1b" stroke-width="1.3"/><rect x="7" y="5" width="7" height="5" fill="#1b1b1b"/><rect x="15.5" y="6" width="2" height="3" fill="#1b1b1b"/></svg>
<div class="t" style="left:1500px;top:860px;width:52px;text-align:right;font-size:11.5px;color:#1b1b1b">5:25</div>
<div class="t" style="left:1480px;top:876px;width:73px;text-align:right;font-size:12px;color:#1b1b1b;letter-spacing:0.05px">2022/08/16</div>
<svg class="a" style="left:1565px;top:868px" width="15" height="16" viewBox="0 0 15 16"><path d="M6 1A7 7 0 1 0 14 10A6 6 0 0 1 6 1Z" fill="none" stroke="#1b1b1b" stroke-width="1.1"/></svg>

</body></html>
